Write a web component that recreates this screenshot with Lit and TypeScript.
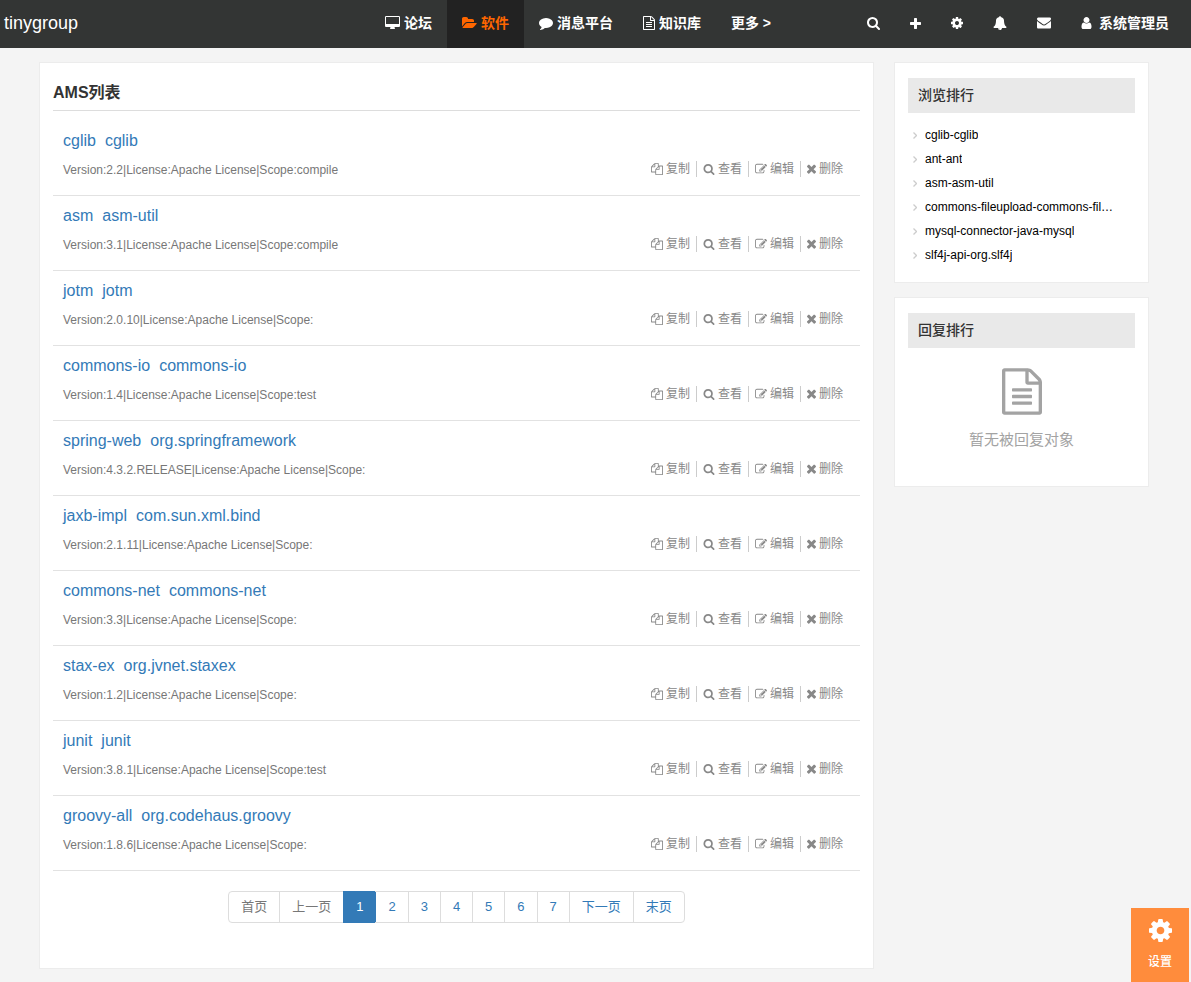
import { LitElement, html, css, svg } from "lit";
import { customElement, property } from "lit/decorators.js";
import { classMap } from "lit/directives/class-map.js";

interface Glyph {
  box: string;
  d: string;
}

const GLYPHS: Record<string, Glyph> = {
  desktop: {
    box: "-64 0 1920 1792",
    d: "M1728 992v-832q0-13-9.5-22.5t-22.5-9.5h-1600q-13 0-22.5 9.5t-9.5 22.5v832q0 13 9.5 22.5t22.5 9.5h1600q13 0 22.5-9.5t9.5-22.5zm128-832v1088q0 66-47 113t-113 47h-544q0 37 16 77.5t32 71 16 43.5q0 26-19 45t-45 19h-512q-26 0-45-19t-19-45q0-14 16-44t32-70 16-78h-544q-66 0-113-47t-47-113v-1088q0-66 47-113t113-47h1600q66 0 113 47t47 113z",
  },
  folder: {
    box: "-64 0 1920 1792",
    d: "M1815 952q0 31-31 66l-336 396q-43 51-120.5 86.5t-143.5 35.5h-1088q-34 0-60.5-13t-26.5-43q0-31 31-66l336-396q43-51 120.5-86.5t143.5-35.5h1088q34 0 60.5 13t26.5 43zm-343-344v160h-832q-94 0-197 47.5t-164 119.5l-337 396-5 6q0-4-.5-12.5t-.5-12.5v-960q0-92 66-158t158-66h320q92 0 158 66t66 158v32h544q92 0 158 66t66 158z",
  },
  comment: {
    box: "0 0 1792 1792",
    d: "M1792 896q0 174-120 321.5t-326 233-450 85.5q-70 0-145-8-198 175-460 242-49 14-114 22-17 2-30.5-9t-17.5-29v-1q-3-4-.5-12t2-10 4.5-9.5l6-9 7-8.5 8-9q7-8 31-34.5t34.5-38 31-39.5 32.5-51 27-59 26-76q-157-89-247.5-220t-90.5-281q0-130 71-248.5t191-204.5 286-136.5 348-50.5q244 0 450 85.5t326 233 120 321.5z",
  },
  file: {
    box: "128 0 1536 1792",
    d: "M1596 380q28 28 48 76t20 88v1152q0 40-28 68t-68 28h-1344q-40 0-68-28t-28-68v-1600q0-40 28-68t68-28h896q40 0 88 20t76 48zm-444-244v376h376q-10-29-22-41l-313-313q-12-12-41-22zm384 1528v-1024h-416q-40 0-68-28t-28-68v-416h-768v1536h1280zm-1024-864q0-14 9-23t23-9h704q14 0 23 9t9 23v64q0 14-9 23t-23 9h-704q-14 0-23-9t-9-23v-64zm736 224q14 0 23 9t9 23v64q0 14-9 23t-23 9h-704q-14 0-23-9t-9-23v-64q0-14 9-23t23-9h704zm0 256q14 0 23 9t9 23v64q0 14-9 23t-23 9h-704q-14 0-23-9t-9-23v-64q0-14 9-23t23-9h704z",
  },
  search: {
    box: "64 128 1664 1664",
    d: "M1216 832q0-185-131.5-316.5t-316.5-131.5-316.5 131.5-131.5 316.5 131.5 316.5 316.5 131.5 316.5-131.5 131.5-316.5zm512 832q0 52-38 90t-90 38q-54 0-90-38l-343-342q-179 124-399 124-143 0-273.5-55.5t-225-150-150-225-55.5-273.5 55.5-273.5 150-225 225-150 273.5-55.5 273.5 55.5 225 150 150 225 55.5 273.5q0 220-124 399l343 343q37 37 37 90z",
  },
  plus: {
    box: "192 128 1408 1408",
    d: "M1600 736v192q0 40-28 68t-68 28h-416v416q0 40-28 68t-68 28h-192q-40 0-68-28t-28-68v-416h-416q-40 0-68-28t-28-68v-192q0-40 28-68t68-28h416v-416q0-40 28-68t68-28h192q40 0 68 28t28 68v416h416q40 0 68 28t28 68z",
  },
  cog: {
    box: "128 128 1536 1536",
    d: "M1152 896q0-106-75-181t-181-75-181 75-75 181 75 181 181 75 181-75 75-181zm512-109v222q0 12-8 23t-20 13l-185 28q-19 54-39 91 35 50 107 138 10 12 10 25t-9 23q-27 37-99 108t-94 71q-12 0-26-9l-138-108q-44 23-91 38-16 136-29 186-7 28-36 28h-222q-14 0-24.5-8.5t-11.5-21.5l-28-184q-49-16-90-37l-141 107q-10 9-25 9-14 0-25-11-126-114-165-168-7-10-7-23 0-12 8-23 15-21 51-66.5t54-70.5q-27-50-41-99l-183-27q-13-2-21-12.5t-8-23.5v-222q0-12 8-23t19-13l186-28q14-46 39-92-40-57-107-138-10-12-10-24 0-10 9-23 26-36 98.5-107.5t94.5-71.5q13 0 26 10l138 107q44-23 91-38 16-136 29-186 7-28 36-28h222q14 0 24.5 8.5t11.5 21.5l28 184q49 16 90 37l142-107q9-9 24-9 13 0 25 10 129 119 165 170 7 8 7 22 0 12-8 23-15 21-51 66.5t-54 70.5q26 50 41 98l183 28q13 2 21 12.5t8 23.5z",
  },
  bell: {
    box: "0 0 1792 1792",
    d: "M912 1696q0-16-16-16-59 0-101.5-42.5t-42.5-101.5q0-16-16-16t-16 16q0 73 51.5 124.5t124.5 51.5q16 0 16-16zm816-288q0 52-38 90t-90 38h-448q0 106-75 181t-181 75-181-75-75-181h-448q-52 0-90-38t-38-90q50-42 91-88t85-119.5 74.5-158.5 50-206 19.5-260q0-152 117-282.5t307-158.5q-8-19-8-39 0-40 28-68t68-28 68 28 28 68q0 20-8 39 190 28 307 158.5t117 282.5q0 139 19.5 260t50 206 74.5 158.5 85 119.5 91 88z",
  },
  envelope: {
    box: "0 64 1792 1792",
    d: "M1792 710v794q0 66-47 113t-113 47h-1472q-66 0-113-47t-47-113v-794q44 49 101 87 362 246 497 345 57 42 92.5 65.5t94.5 48 110 24.5h2q51 0 110-24.5t94.5-48 92.5-65.5q170-123 498-345 57-39 100-87zm0-294q0 79-49 151t-122 123q-376 261-468 325-10 7-42.5 31t-54 38.5-52 32.5-57.5 27-50 9h-2q-23 0-50-9t-57.5-27-52-32.5-54-38.5-42.5-31q-91-64-262-182.5t-205-142.5q-62-42-117-115.5t-55-136.5q0-78 41.5-130t118.5-52h1472q65 0 112.5 47t47.5 113z",
  },
  user: {
    box: "256 128 1280 1536",
    d: "M1536 1399q0 109-62.5 187t-150.5 78h-854q-88 0-150.5-78t-62.5-187q0-85 8.5-160.5t31.5-152 58.5-131 94-89 134.5-34.5q131 128 313 128t313-128q76 0 134.5 34.5t94 89 58.5 131 31.5 152 8.5 160.5zm-256-887q0 159-112.5 271.5t-271.5 112.5-271.5-112.5-112.5-271.5 112.5-271.5 271.5-112.5 271.5 112.5 112.5 271.5z",
  },
  copy: {
    box: "0 0 1792 1792",
    d: "M1696 384q40 0 68 28t28 68v1216q0 40-28 68t-68 28h-960q-40 0-68-28t-28-68v-288h-544q-40 0-68-28t-28-68v-672q0-40 20-88t48-76l408-408q28-28 76-48t88-20h416q40 0 68 28t28 68v328q68-40 128-40h416zm-544 213l-299 299h299v-299zm-640-384l-299 299h299v-299zm196 647l316-316v-416h-384v416q0 40-28 68t-68 28h-416v640h512v-256q0-40 20-88t48-76zm956 804v-1152h-384v416q0 40-28 68t-68 28h-416v640h896z",
  },
  edit: {
    box: "0 0 1792 1792",
    d: "M888 1184l116-116-152-152-116 116v56h96v96h56zm440-720q-16-16-33 1l-350 350q-17 17-1 33t33-1l350-350q17-17 1-33zm80 594v190q0 119-84.5 203.5t-203.5 84.5h-832q-119 0-203.5-84.5t-84.5-203.5v-832q0-119 84.5-203.5t203.5-84.5h832q63 0 117 25 15 7 18 23 3 17-9 29l-49 49q-14 14-32 8-23-6-45-6h-832q-66 0-113 47t-47 113v832q0 66 47 113t113 47h832q66 0 113-47t47-113v-126q0-13 9-22l64-64q15-15 35-7t20 29zm-96-738l288 288-672 672h-288v-288zm444 132l-92 92-288-288 92-92q28-28 68-28t68 28l152 152q28 28 28 68t-28 68z",
  },
  times: {
    box: "302 320 1188 1376",
    d: "M1490 1322q0 40-28 68l-136 136q-28 28-68 28t-68-28l-294-294-294 294q-28 28-68 28t-68-28l-136-136q-28-28-28-68t28-68l294-294-294-294q-28-28-28-68t28-68l136-136q28-28 68-28t68 28l294 294 294-294q28-28 68-28t68 28l136 136q28 28 28 68t-28 68l-294 294 294 294q28 28 28 68z",
  },
};

@customElement("glyph-icon")
class GlyphIcon extends LitElement {
  @property() name = "";

  static styles = css`
    :host {
      display: inline-flex;
      flex: none;
    }
    .shape {
      display: block;
      width: 100%;
      height: 100%;
      fill: currentColor;
    }
  `;

  render() {
    const g = GLYPHS[this.name];
    return html`<svg class="shape" viewBox=${g.box} aria-hidden="true">${svg`<path d=${g.d}></path>`}</svg>`;
  }
}

const NAV = [
  { icon: "desktop", label: "论坛", size: "wide", active: false },
  { icon: "folder", label: "软件", size: "wide", active: true },
  { icon: "comment", label: "消息平台", size: "mid", active: false },
  { icon: "file", label: "知识库", size: "slim", active: false },
];

const TOOLS = [
  { icon: "search", label: "搜索", size: "tool" },
  { icon: "plus", label: "新增", size: "tiny" },
  { icon: "cog", label: "设置", size: "small" },
  { icon: "bell", label: "通知", size: "mid" },
  { icon: "envelope", label: "邮件", size: "mid" },
];

const ITEMS = [
  { name: "cglib", group: "cglib", version: "2.2", scope: "compile" },
  { name: "asm", group: "asm-util", version: "3.1", scope: "compile" },
  { name: "jotm", group: "jotm", version: "2.0.10", scope: "" },
  { name: "commons-io", group: "commons-io", version: "1.4", scope: "test" },
  { name: "spring-web", group: "org.springframework", version: "4.3.2.RELEASE", scope: "" },
  { name: "jaxb-impl", group: "com.sun.xml.bind", version: "2.1.11", scope: "" },
  { name: "commons-net", group: "commons-net", version: "3.3", scope: "" },
  { name: "stax-ex", group: "org.jvnet.staxex", version: "1.2", scope: "" },
  { name: "junit", group: "junit", version: "3.8.1", scope: "test" },
  { name: "groovy-all", group: "org.codehaus.groovy", version: "1.8.6", scope: "" },
];

const ACTIONS = [
  { icon: "copy", label: "复制", size: "act" },
  { icon: "search", label: "查看", size: "act-s" },
  { icon: "edit", label: "编辑", size: "act" },
  { icon: "times", label: "删除", size: "act-x" },
];

const PAGES = ["首页", "上一页", "1", "2", "3", "4", "5", "6", "7", "下一页", "末页"];

const RANKING = [
  "cglib-cglib",
  "ant-ant",
  "asm-asm-util",
  "commons-fileupload-commons-fileupload",
  "mysql-connector-java-mysql",
  "slf4j-api-org.slf4j",
];

@customElement("app-root")
class AppRoot extends LitElement {
  static styles = css`
    :host {
      display: block;
      min-height: 100vh;
      background: #f4f4f4;
      color: #333;
      font: 13px/20px "Liberation Sans", "Noto Sans CJK SC", sans-serif;
    }
    * {
      box-sizing: border-box;
    }
    a {
      color: inherit;
      text-decoration: none;
    }
    button {
      border: 0;
      padding: 0;
      background: none;
      color: inherit;
      font: inherit;
      cursor: pointer;
    }
    ul,
    h1,
    h2,
    p {
      margin: 0;
      padding: 0;
      list-style: none;
      font-weight: 400;
    }

    .bar {
      display: flex;
      height: 48px;
      padding: 0 7px 0 4px;
      background: #333534;
      color: #fff;
      font-size: 14px;
      font-weight: 600;
    }
    .brand {
      margin-right: auto;
      font-size: 18px;
      font-weight: 500;
      line-height: 46px;
    }
    .nav,
    .tools {
      display: flex;
    }
    .tools {
      margin-left: 66px;
    }
    .entry {
      display: flex;
      align-items: center;
      gap: 4px;
      height: 100%;
      padding: 0 15px 2px;
      line-height: 46px;
      white-space: nowrap;
    }
    .entry.active {
      background: #222;
      color: #ff6600;
    }
    .who {
      gap: 7px;
    }
    .wide {
      width: 15px;
      height: 14px;
    }
    .mid {
      width: 14px;
      height: 14px;
    }
    .slim {
      width: 12px;
      height: 14px;
    }
    .small {
      width: 12px;
      height: 12px;
    }
    .tiny {
      width: 11px;
      height: 11px;
    }
    .tool {
      width: 13px;
      height: 13px;
    }
    .person {
      width: 11px;
      height: 12px;
    }

    .page {
      display: grid;
      grid-template-columns: minmax(0, 1fr) 255px;
      gap: 20px;
      align-items: start;
      padding: 14px 42px 13px 39px;
    }
    .card {
      border: 1px solid #ececec;
      background: #fff;
    }
    .main {
      padding: 13px 13px 45px;
    }
    .title {
      border-bottom: 1px solid #ddd;
      font-size: 16px;
      font-weight: 600;
      line-height: 34px;
    }
    .list {
      padding-top: 10px;
    }
    .row {
      display: flex;
      align-items: flex-end;
      justify-content: space-between;
      padding: 8px 10px 15px;
      border-bottom: 1px solid #e2e2e2;
    }
    .name {
      display: flex;
      gap: 9px;
      margin-bottom: 7px;
      color: #337ab7;
      font-size: 16px;
      line-height: 24px;
    }
    .meta {
      color: #777;
      font-size: 12px;
    }
    .actions {
      display: flex;
      padding-bottom: 3px;
      color: #888;
      font-size: 12px;
    }
    .action {
      display: flex;
      align-items: center;
      gap: 3px;
      height: 16px;
      padding: 0 6px;
      border-right: 1px solid #ccc;
      line-height: 16px;
    }
    .actions .action:last-child {
      padding-right: 7px;
      border-right: 0;
    }
    .act {
      width: 12px;
      height: 12px;
    }
    .act-s {
      width: 12px;
      height: 11px;
    }
    .act-x {
      width: 9px;
      height: 11px;
    }

    .pager {
      display: flex;
      justify-content: center;
      padding-top: 20px;
    }
    .pages {
      display: flex;
      border: 1px solid #ddd;
      border-radius: 4px;
      color: #337ab7;
    }
    .num {
      display: block;
      height: 30px;
      padding: 0 12px;
      line-height: 30px;
    }
    .cell + .cell {
      border-left: 1px solid #ddd;
    }
    .muted {
      color: #777;
    }
    .pages .cell.current {
      margin: -1px 0;
      border: 1px solid #337ab7;
      border-right: 0;
      background: #337ab7;
      color: #fff;
    }
    .cell.current + .cell {
      border-left-color: #337ab7;
    }

    .side {
      display: grid;
      grid-template-columns: minmax(0, 1fr);
      gap: 14px;
    }
    .panel {
      padding: 15px 13px;
    }
    .head {
      padding: 0 10px;
      background: #e9e9e9;
      font-size: 14px;
      font-weight: 500;
      line-height: 35px;
    }
    .ranks {
      padding: 10px 18px 0 5px;
      color: #000;
      font-size: 12px;
      line-height: 24px;
    }
    .rank {
      display: flex;
      align-items: center;
      gap: 8px;
    }
    .chev {
      flex: none;
      width: 4px;
      height: 7px;
      fill: none;
      stroke: #ccc;
      stroke-width: 1.3;
    }
    .link {
      overflow: hidden;
      text-overflow: ellipsis;
      white-space: nowrap;
    }
    .empty {
      display: grid;
      justify-items: center;
      gap: 15px;
      padding: 20px 0 21px;
      color: #a3a3a3;
      font-size: 15px;
    }
    .big {
      width: 40px;
      height: 47px;
    }

    .settings {
      position: fixed;
      right: 2px;
      bottom: 0;
      display: flex;
      flex-direction: column;
      align-items: center;
      gap: 10px;
      width: 58px;
      height: 74px;
      padding-top: 11px;
      background: #ff8c3c;
      color: #fff;
      font-size: 12px;
      font-weight: 500;
    }
    .gear {
      width: 23px;
      height: 23px;
    }
  `;

  render() {
    return html`
      <header class="bar">
        <a class="brand" href="#">tinygroup</a>
        <nav class="nav">
          ${NAV.map(
            (n) => html`<a class=${classMap({ entry: true, active: n.active })} href="#">
              <glyph-icon class=${n.size} name=${n.icon}></glyph-icon>${n.label}</a>`
          )}
          <a class="entry" href="#">更多 &gt;</a>
        </nav>
        <div class="tools">
          ${TOOLS.map(
            (t) => html`<button class="entry" aria-label=${t.label}>
              <glyph-icon class=${t.size} name=${t.icon}></glyph-icon>
            </button>`
          )}
          <a class="entry who" href="#"><glyph-icon class="person" name="user"></glyph-icon>系统管理员</a>
        </div>
      </header>

      <div class="page">
        <main class="card main">
          <h1 class="title">AMS列表</h1>
          <ul class="list">
            ${ITEMS.map(
              (i) => html`<li class="row">
                <div>
                  <a class="name" href="#"><span>${i.name}</span><span>${i.group}</span></a>
                  <p class="meta">Version:${i.version}|License:Apache License|Scope:${i.scope}</p>
                </div>
                <div class="actions">
                  ${ACTIONS.map(
                    (a) => html`<a class="action" href="#"><glyph-icon class=${a.size} name=${a.icon}></glyph-icon>${a.label}</a>`
                  )}
                </div>
              </li>`
            )}
          </ul>
          <nav class="pager">
            <ul class="pages">
              ${PAGES.map(
                (p, n) => html`<li class=${classMap({ cell: true, muted: n < 2, current: n === 2 })}>
                  <a class="num" href="#">${p}</a>
                </li>`
              )}
            </ul>
          </nav>
        </main>

        <aside class="side">
          <section class="card panel">
            <h2 class="head">浏览排行</h2>
            <ul class="ranks">
              ${RANKING.map(
                (r) => html`<li class="rank">
                  <svg class="chev" viewBox="0 0 4 7" aria-hidden="true"><path d="M.5 .5l3 3-3 3"></path></svg>
                  <a class="link" href="#">${r}</a>
                </li>`
              )}
            </ul>
          </section>
          <section class="card panel">
            <h2 class="head">回复排行</h2>
            <div class="empty">
              <glyph-icon class="big" name="file"></glyph-icon>
              <p>暂无被回复对象</p>
            </div>
          </section>
        </aside>
      </div>

      <button class="settings"><glyph-icon class="gear" name="cog"></glyph-icon>设置</button>
    `;
  }
}
